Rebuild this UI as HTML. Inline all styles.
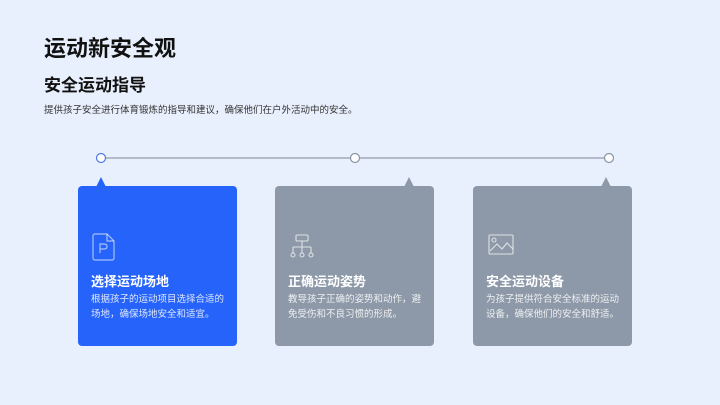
<!DOCTYPE html>
<html><head><meta charset="utf-8"><style>
body{margin:0;width:720px;height:405px;background:#e9f0fd;font-family:"Liberation Sans","Noto Sans CJK SC",sans-serif;position:relative;overflow:hidden}
.a{position:absolute;white-space:nowrap}
.card{position:absolute;top:186px;width:159px;height:160px;border-radius:4px;color:#fff}
.card .h{position:absolute;left:13px;top:85px;font-size:13px;font-weight:bold}
.card .t{position:absolute;left:13px;top:107px;font-size:9.5px;line-height:14.5px;color:rgba(255,255,255,.85);white-space:nowrap}
.card svg.ic{position:absolute;left:14px;top:47px}
</style></head><body>
<div class="a" style="left:44px;top:31px;font-size:22px;font-weight:bold;color:#111">运动新安全观</div>
<div class="a" style="left:44px;top:71px;font-size:17px;font-weight:bold;color:#111">安全运动指导</div>
<div class="a" style="left:44px;top:102px;font-size:9.5px;color:#333">提供孩子安全进行体育锻炼的指导和建议，确保他们在户外活动中的安全。</div>
<svg class="a" style="left:0;top:0" width="720" height="200">
<line x1="106" y1="158" x2="604" y2="158" stroke="#7d8698" stroke-width="1"/>
<circle cx="101" cy="158" r="4.5" fill="#fff" stroke="#4a7ae8" stroke-width="1.2"/>
<circle cx="355" cy="158" r="4.5" fill="#fff" stroke="#8a93a3" stroke-width="1.2"/>
<circle cx="609" cy="158" r="4.5" fill="#fff" stroke="#8a93a3" stroke-width="1.2"/>
<polygon points="101,177 96,187 106,187" fill="#2563fb"/>
<polygon points="409,177 404,187 414,187" fill="#8d99a8"/>
<polygon points="606,177 601,187 611,187" fill="#8d99a8"/>
</svg>
<div class="card" style="left:78px;background:#2563fb">
<svg class="ic" width="24" height="28" viewBox="0 0 24 28" fill="none" stroke="rgba(255,255,255,.6)" stroke-width="1.2"><path d="M2 1H15L22 8V25Q22 27 20 27H3Q1 27 1 25V3Q1 1 3 1Z"/><path d="M15 1V8H22"/><path d="M8 20V11H12Q15 11 15 13.5Q15 16 12 16H8"/></svg>
<div class="h">选择运动场地</div>
<div class="t">根据孩子的运动项目选择合适的<br>场地，确保场地安全和适宜。</div>
</div>
<div class="card" style="left:275px;background:#8d99a8">
<svg class="ic" width="26" height="28" viewBox="0 0 26 28" fill="none" stroke="rgba(255,255,255,.7)" stroke-width="1.1"><rect x="7" y="2" width="12" height="6" rx="1"/><path d="M13 8V14M4 14H22M4 14V20M13 14V20M22 14V20"/><circle cx="4" cy="22" r="2"/><circle cx="13" cy="22" r="2"/><circle cx="22" cy="22" r="2"/></svg>
<div class="h">正确运动姿势</div>
<div class="t">教导孩子正确的姿势和动作，避<br>免受伤和不良习惯的形成。</div>
</div>
<div class="card" style="left:473px;background:#8d99a8">
<svg class="ic" width="28" height="24" viewBox="0 0 28 24" fill="none" stroke="rgba(255,255,255,.7)" stroke-width="1.1"><rect x="2" y="2" width="24" height="19" rx="1"/><circle cx="7" cy="7" r="2"/><path d="M3 18L10 11L15 16L20 10L26 16"/></svg>
<div class="h">安全运动设备</div>
<div class="t">为孩子提供符合安全标准的运动<br>设备，确保他们的安全和舒适。</div>
</div>
</body></html>
